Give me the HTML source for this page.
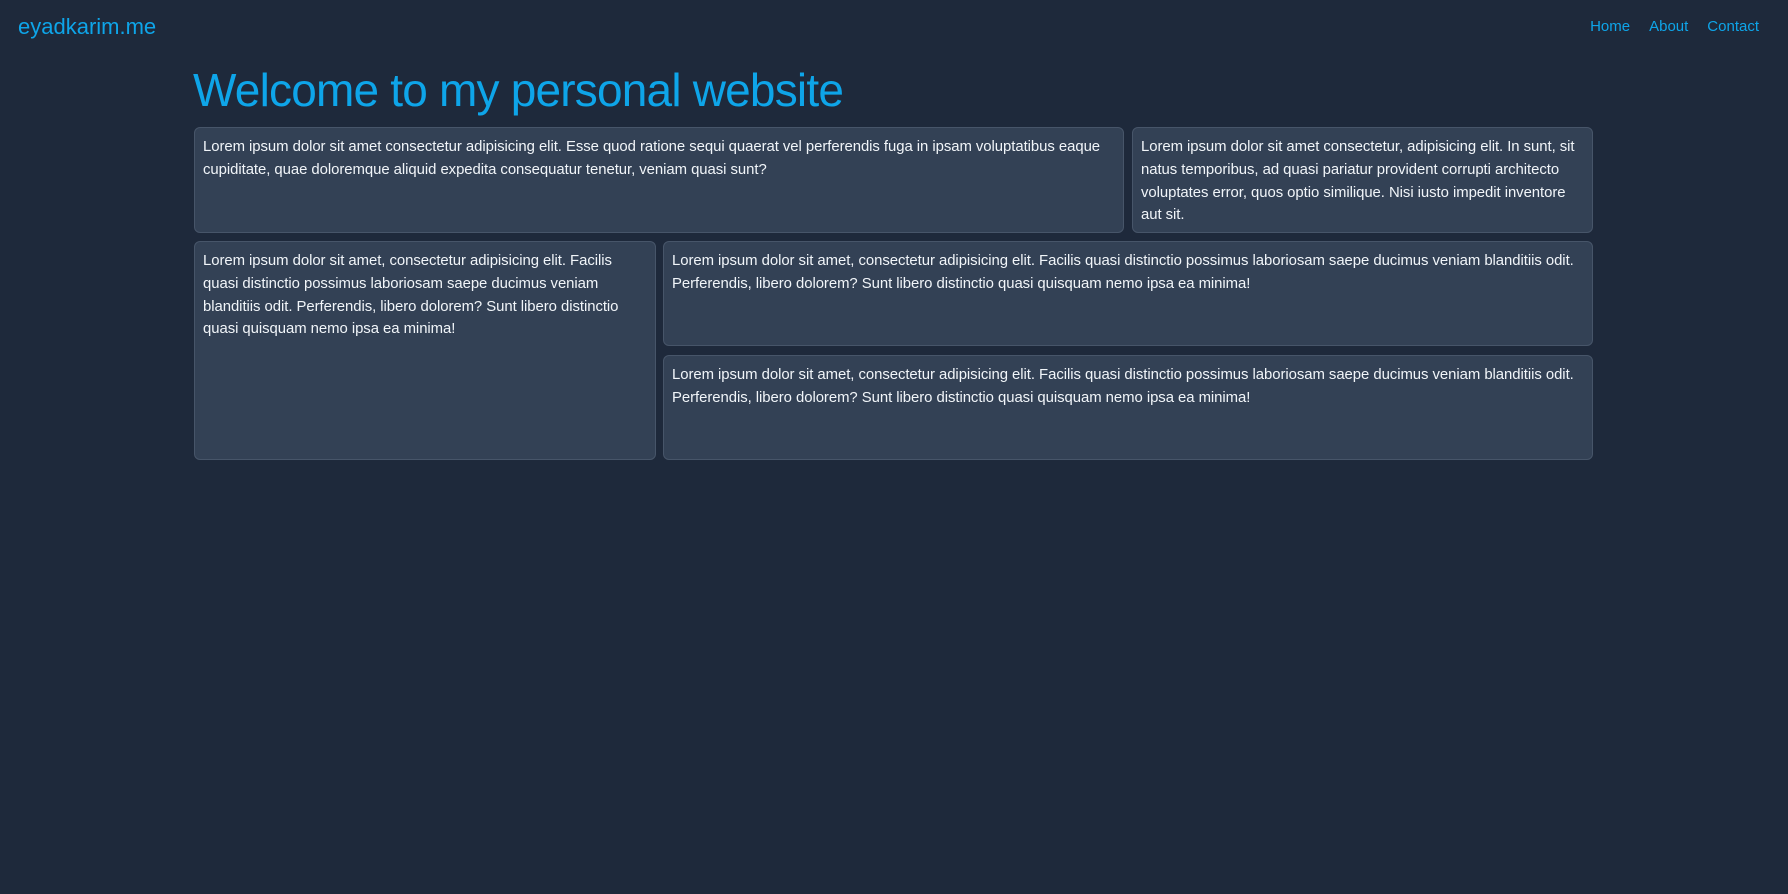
<!DOCTYPE html>
<html><head><style>
*{box-sizing:border-box;margin:0;padding:0}
body{width:1788px;height:894px;background:#1e293b;font-family:"Liberation Sans",sans-serif;overflow:hidden;position:relative}
.logo{position:absolute;left:18px;top:14px;font-size:22px;color:#0ea5e9}
.nav{position:absolute;right:29px;top:18px;font-size:15px;color:#0ea5e9}
.nav span{margin-left:19px}
h1{position:absolute;left:193px;top:63px;font-weight:normal;font-size:46px;color:#0ea5e9;letter-spacing:-0.8px}
.card{position:absolute;background:#334155;border:1px solid #475569;border-radius:6px;padding:8px 8px;color:#f1f5f9;font-size:14.9px;letter-spacing:-0.05px;line-height:22.8px;white-space:nowrap;overflow:hidden}
</style></head><body>
<div class="logo">eyadkarim.me</div>
<div class="nav"><span>Home</span><span>About</span><span>Contact</span></div>
<h1>Welcome to my personal website</h1>
<div class="card" style="left:194px;top:127px;width:930px;height:106px">Lorem ipsum dolor sit amet consectetur adipisicing elit. Esse quod ratione sequi quaerat vel perferendis fuga in ipsam voluptatibus eaque<br>cupiditate, quae doloremque aliquid expedita consequatur tenetur, veniam quasi sunt?</div>
<div class="card" style="left:1132px;top:127px;width:461px;height:106px">Lorem ipsum dolor sit amet consectetur, adipisicing elit. In sunt, sit<br>natus temporibus, ad quasi pariatur provident corrupti architecto<br>voluptates error, quos optio similique. Nisi iusto impedit inventore<br>aut sit.</div>
<div class="card" style="left:194px;top:241px;width:462px;height:219px">Lorem ipsum dolor sit amet, consectetur adipisicing elit. Facilis<br>quasi distinctio possimus laboriosam saepe ducimus veniam<br>blanditiis odit. Perferendis, libero dolorem? Sunt libero distinctio<br>quasi quisquam nemo ipsa ea minima!</div>
<div class="card" style="left:663px;top:241px;width:930px;height:105px">Lorem ipsum dolor sit amet, consectetur adipisicing elit. Facilis quasi distinctio possimus laboriosam saepe ducimus veniam blanditiis odit.<br>Perferendis, libero dolorem? Sunt libero distinctio quasi quisquam nemo ipsa ea minima!</div>
<div class="card" style="left:663px;top:355px;width:930px;height:105px">Lorem ipsum dolor sit amet, consectetur adipisicing elit. Facilis quasi distinctio possimus laboriosam saepe ducimus veniam blanditiis odit.<br>Perferendis, libero dolorem? Sunt libero distinctio quasi quisquam nemo ipsa ea minima!</div>
</body></html>
